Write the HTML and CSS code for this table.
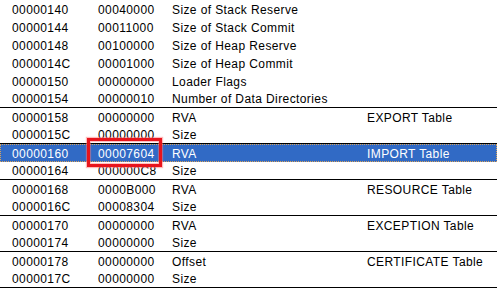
FILE: index.html
```html
<!DOCTYPE html>
<html>
<head>
<meta charset="utf-8">
<link rel="stylesheet" href="styles.css">
</head>
<body>
<div class="list">
  <div class="row"><span>00000140</span><span>00040000</span><span>Size of Stack Reserve</span><span></span></div>
  <div class="row"><span>00000144</span><span>00011000</span><span>Size of Stack Commit</span><span></span></div>
  <div class="row"><span>00000148</span><span>00100000</span><span>Size of Heap Reserve</span><span></span></div>
  <div class="row"><span>0000014C</span><span>00001000</span><span>Size of Heap Commit</span><span></span></div>
  <div class="row"><span>00000150</span><span>00000000</span><span>Loader Flags</span><span></span></div>
  <div class="row end"><span>00000154</span><span>00000010</span><span>Number of Data Directories</span><span></span></div>
  <div class="row"><span>00000158</span><span>00000000</span><span>RVA</span><span>EXPORT Table</span></div>
  <div class="row end"><span>0000015C</span><span>00000000</span><span>Size</span><span></span></div>
  <div class="row selected"><span>00000160</span><span class="marked">00007604</span><span>RVA</span><span>IMPORT Table</span></div>
  <div class="row end"><span>00000164</span><span>000000C8</span><span>Size</span><span></span></div>
  <div class="row"><span>00000168</span><span>0000B000</span><span>RVA</span><span>RESOURCE Table</span></div>
  <div class="row end"><span>0000016C</span><span>00008304</span><span>Size</span><span></span></div>
  <div class="row"><span>00000170</span><span>00000000</span><span>RVA</span><span>EXCEPTION Table</span></div>
  <div class="row end"><span>00000174</span><span>00000000</span><span>Size</span><span></span></div>
  <div class="row"><span>00000178</span><span>00000000</span><span>Offset</span><span>CERTIFICATE Table</span></div>
  <div class="row end"><span>0000017C</span><span>00000000</span><span>Size</span><span></span></div>
</div>
</body>
</html>
```
FILE: styles.css
```css
html, body {
  margin: 0;
  padding: 0;
  background: #ffffff;
}
body {
  width: 497px;
  height: 288px;
  overflow: hidden;
  font-family: "Liberation Sans", Arial, sans-serif;
  font-size: 12px;
  letter-spacing: 0.4px;
  color: #000000;
}
.list {
  display: flex;
  flex-direction: column;
}
.row {
  display: grid;
  grid-template-columns: 86px 74px 195px 1fr;
  padding-left: 12px;
  height: 18px;
  box-sizing: border-box;
  line-height: 18px;
  white-space: nowrap;
}
.row span {
  display: block;
  padding-top: 1px;
}
.row.end {
  border-bottom: 1px solid #000000;
  line-height: 17px;
}
.row.selected {
  background: #316ac5;
  color: #ffffff;
  outline: 1px dotted #d9a35a;
  outline-offset: -1px;
}
.marked {
  position: relative;
}
.marked::after {
  content: "";
  position: absolute;
  left: -11px;
  top: -6px;
  width: 69px;
  height: 23px;
  border: 3px solid #e8141c;
  box-shadow: 0 0 1px 1px rgba(255, 120, 120, 0.5), inset 0 0 1px 1px rgba(255, 120, 120, 0.5);
}
```
